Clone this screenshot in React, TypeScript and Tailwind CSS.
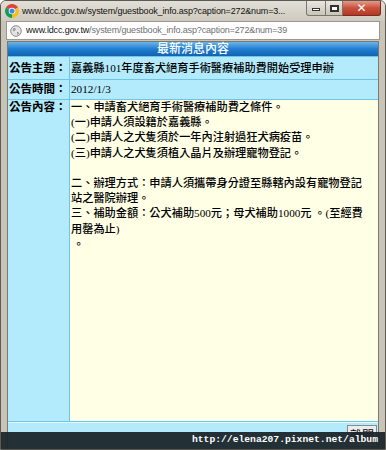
import React from "react";

const cjk = { fontFamily: '"Liberation Serif", "Noto Sans CJK TC", serif' };
const ui = { fontFamily: '"Liberation Sans", Arial, sans-serif' };

const ChromeIcon = () => (
  <svg width="14" height="14" viewBox="0 0 16 16">
    <path d="M8 8 L1.1 4 A8 8 0 0 1 14.9 4 Z" fill="#db4437" />
    <path d="M8 8 L14.9 4 A8 8 0 0 1 8 16 Z" fill="#f4c20d" />
    <path d="M8 8 L8 16 A8 8 0 0 1 1.1 4 Z" fill="#0f9d58" />
    <circle cx="8" cy="8" r="3.8" fill="#fff" />
    <circle cx="8" cy="8" r="2.9" fill="#4285f4" />
  </svg>
);

const GlobeIcon = () => (
  <svg width="12" height="12" viewBox="0 0 12 12">
    <circle cx="6" cy="6" r="5.3" fill="#e4e4e4" stroke="#8a8a8a" strokeWidth="1" />
    <path d="M3 3.5 Q5 2.5 6 4 Q5 6 3.5 6.5 Q2.5 5 3 3.5 Z M7 7 Q9 6.5 9.3 8.5 Q8 10 7 9.5 Z" fill="#9a9a9a" />
  </svg>
);

const Label = ({ children }: { children: React.ReactNode }) => (
  <div className="bg-[#b3ebfd] pl-px font-bold text-[11.5px] flex items-start" style={cjk}>
    {children}
  </div>
);

export default function App() {
  return (
    <div className="relative w-[386px] h-[450px] overflow-hidden bg-[#c9c4b8] border border-[#5e5a52] rounded-t-[6px] flex flex-col">
      {/* title bar */}
      <div className="h-[20px] flex items-start bg-gradient-to-b from-[#e2dfd8] to-[#cfcabe] shrink-0">
        <div className="pl-[4px] pt-[3px]">
          <ChromeIcon />
        </div>
        <div
          className="pl-[3px] pt-[4px] text-[9px] tracking-[-0.15px] leading-[12px] text-[#111] whitespace-nowrap"
          style={ui}
        >
          www.ldcc.gov.tw/system/guestbook_info.asp?caption=272&amp;num=3...
        </div>
        <div className="ml-auto flex h-[15px] mr-[4px]">
          <div className="w-[20px] h-[15px] border border-[#7b7569] border-t-0 rounded-bl-[3px] bg-gradient-to-b from-[#e8e6e0] to-[#cac5b9] flex items-center justify-center">
            <div className="w-[8px] h-[3px] border border-[#333] bg-white mt-[3px]" />
          </div>
          <div className="w-[17px] h-[15px] border-b border-r border-[#7b7569] bg-gradient-to-b from-[#e8e6e0] to-[#cac5b9] flex items-center justify-center">
            <div className="w-[9px] h-[7px] border-2 border-[#333] bg-white" />
          </div>
          <div
            className="w-[38px] h-[15px] border border-t-0 border-l-0 border-[#7a2a1e] rounded-br-[3px] bg-gradient-to-b from-[#e49a8a] via-[#c9503c] to-[#b23a25] flex items-center justify-center text-white text-[12px] font-bold leading-none"
            style={{ fontFamily: '"DejaVu Sans", sans-serif' }}
          >
            ✕
          </div>
        </div>
      </div>
      {/* address bar */}
      <div className="mx-[5px] h-[19px] bg-white border border-[#9b978d] flex items-center shrink-0">
        <div className="pl-[3px] pr-[4px] flex items-center">
          <GlobeIcon />
        </div>
        <div className="text-[9px] tracking-[-0.15px] text-[#707070] leading-none whitespace-nowrap" style={ui}>
          <span className="text-[#111]">www.ldcc.gov.tw</span>/system/guestbook_info.asp?caption=272&amp;num=39
        </div>
      </div>
      {/* page */}
      <div className="mx-[6px] mt-px flex-1 bg-[#6fc4ec] border border-[#7d786d] border-b-0 flex flex-col gap-px">
        <div
          className="h-[14px] bg-gradient-to-b from-[#6ab4ea] via-[#1f7fd1] to-[#1262b0] text-white text-[12px] font-medium leading-[14px] text-center"
          style={cjk}
        >
          最新消息內容
        </div>
        <div className="grid grid-cols-[61px_1fr] gap-px h-[22px]">
          <Label>
            <span className="leading-[22px]">公告主題：</span>
          </Label>
          <div className="bg-[#b3ebfd] text-[11.2px] font-medium leading-[22px] pl-px" style={cjk}>
            嘉義縣101年度畜犬絕育手術醫療補助費開始受理申辦
          </div>
        </div>
        <div className="grid grid-cols-[61px_1fr] gap-px h-[19px]">
          <Label>
            <span className="leading-[19px]">公告時間：</span>
          </Label>
          <div className="bg-[#b3ebfd] text-[11.2px] leading-[19px] pl-px" style={cjk}>
            2012/1/3
          </div>
        </div>
        <div className="grid grid-cols-[61px_1fr] gap-px flex-1">
          <Label>
            <span className="leading-[15.2px]">公告內容：</span>
          </Label>
          <div className="bg-[#ffffe6] text-[11.2px] font-medium leading-[15.2px] pl-px pr-[8px] text-black" style={cjk}>
            一、申請畜犬絕育手術醫療補助費之條件。
            <br />
            (一)申請人須設籍於嘉義縣。
            <br />
            (二)申請人之犬隻須於一年內注射過狂犬病疫苗。
            <br />
            (三)申請人之犬隻須植入晶片及辦理寵物登記。
            <br />
            <br />
            二、辦理方式：申請人須攜帶身分證至縣轄內設有寵物登記站之醫院辦理。
            <br />
            三、補助金額：公犬補助500元；母犬補助1000元 。(至經費用罄為止)
            <br />
            <span className="pl-[2px]">。</span>
          </div>
        </div>
        <div className="h-[27px] bg-[#b3ebfd] border-t border-[#e6f8ff] flex justify-end items-start pr-[1px] pt-[2px]">
          <div
            className="h-[22px] w-[30px] bg-[#ececec] border border-[#8a8a8a] text-[12px] leading-[20px] text-center text-black"
            style={cjk}
          >
            離開
          </div>
        </div>
      </div>
      {/* watermark */}
      <div className="absolute left-0 right-0 bottom-0 h-[17px] bg-[#1b262b]/95 flex items-center justify-end pr-[7px]">
        <span className="text-white text-[9.7px] font-bold" style={{ fontFamily: '"Liberation Mono", monospace' }}>
          http://elena207.pixnet.net/album
        </span>
      </div>
    </div>
  );
}
